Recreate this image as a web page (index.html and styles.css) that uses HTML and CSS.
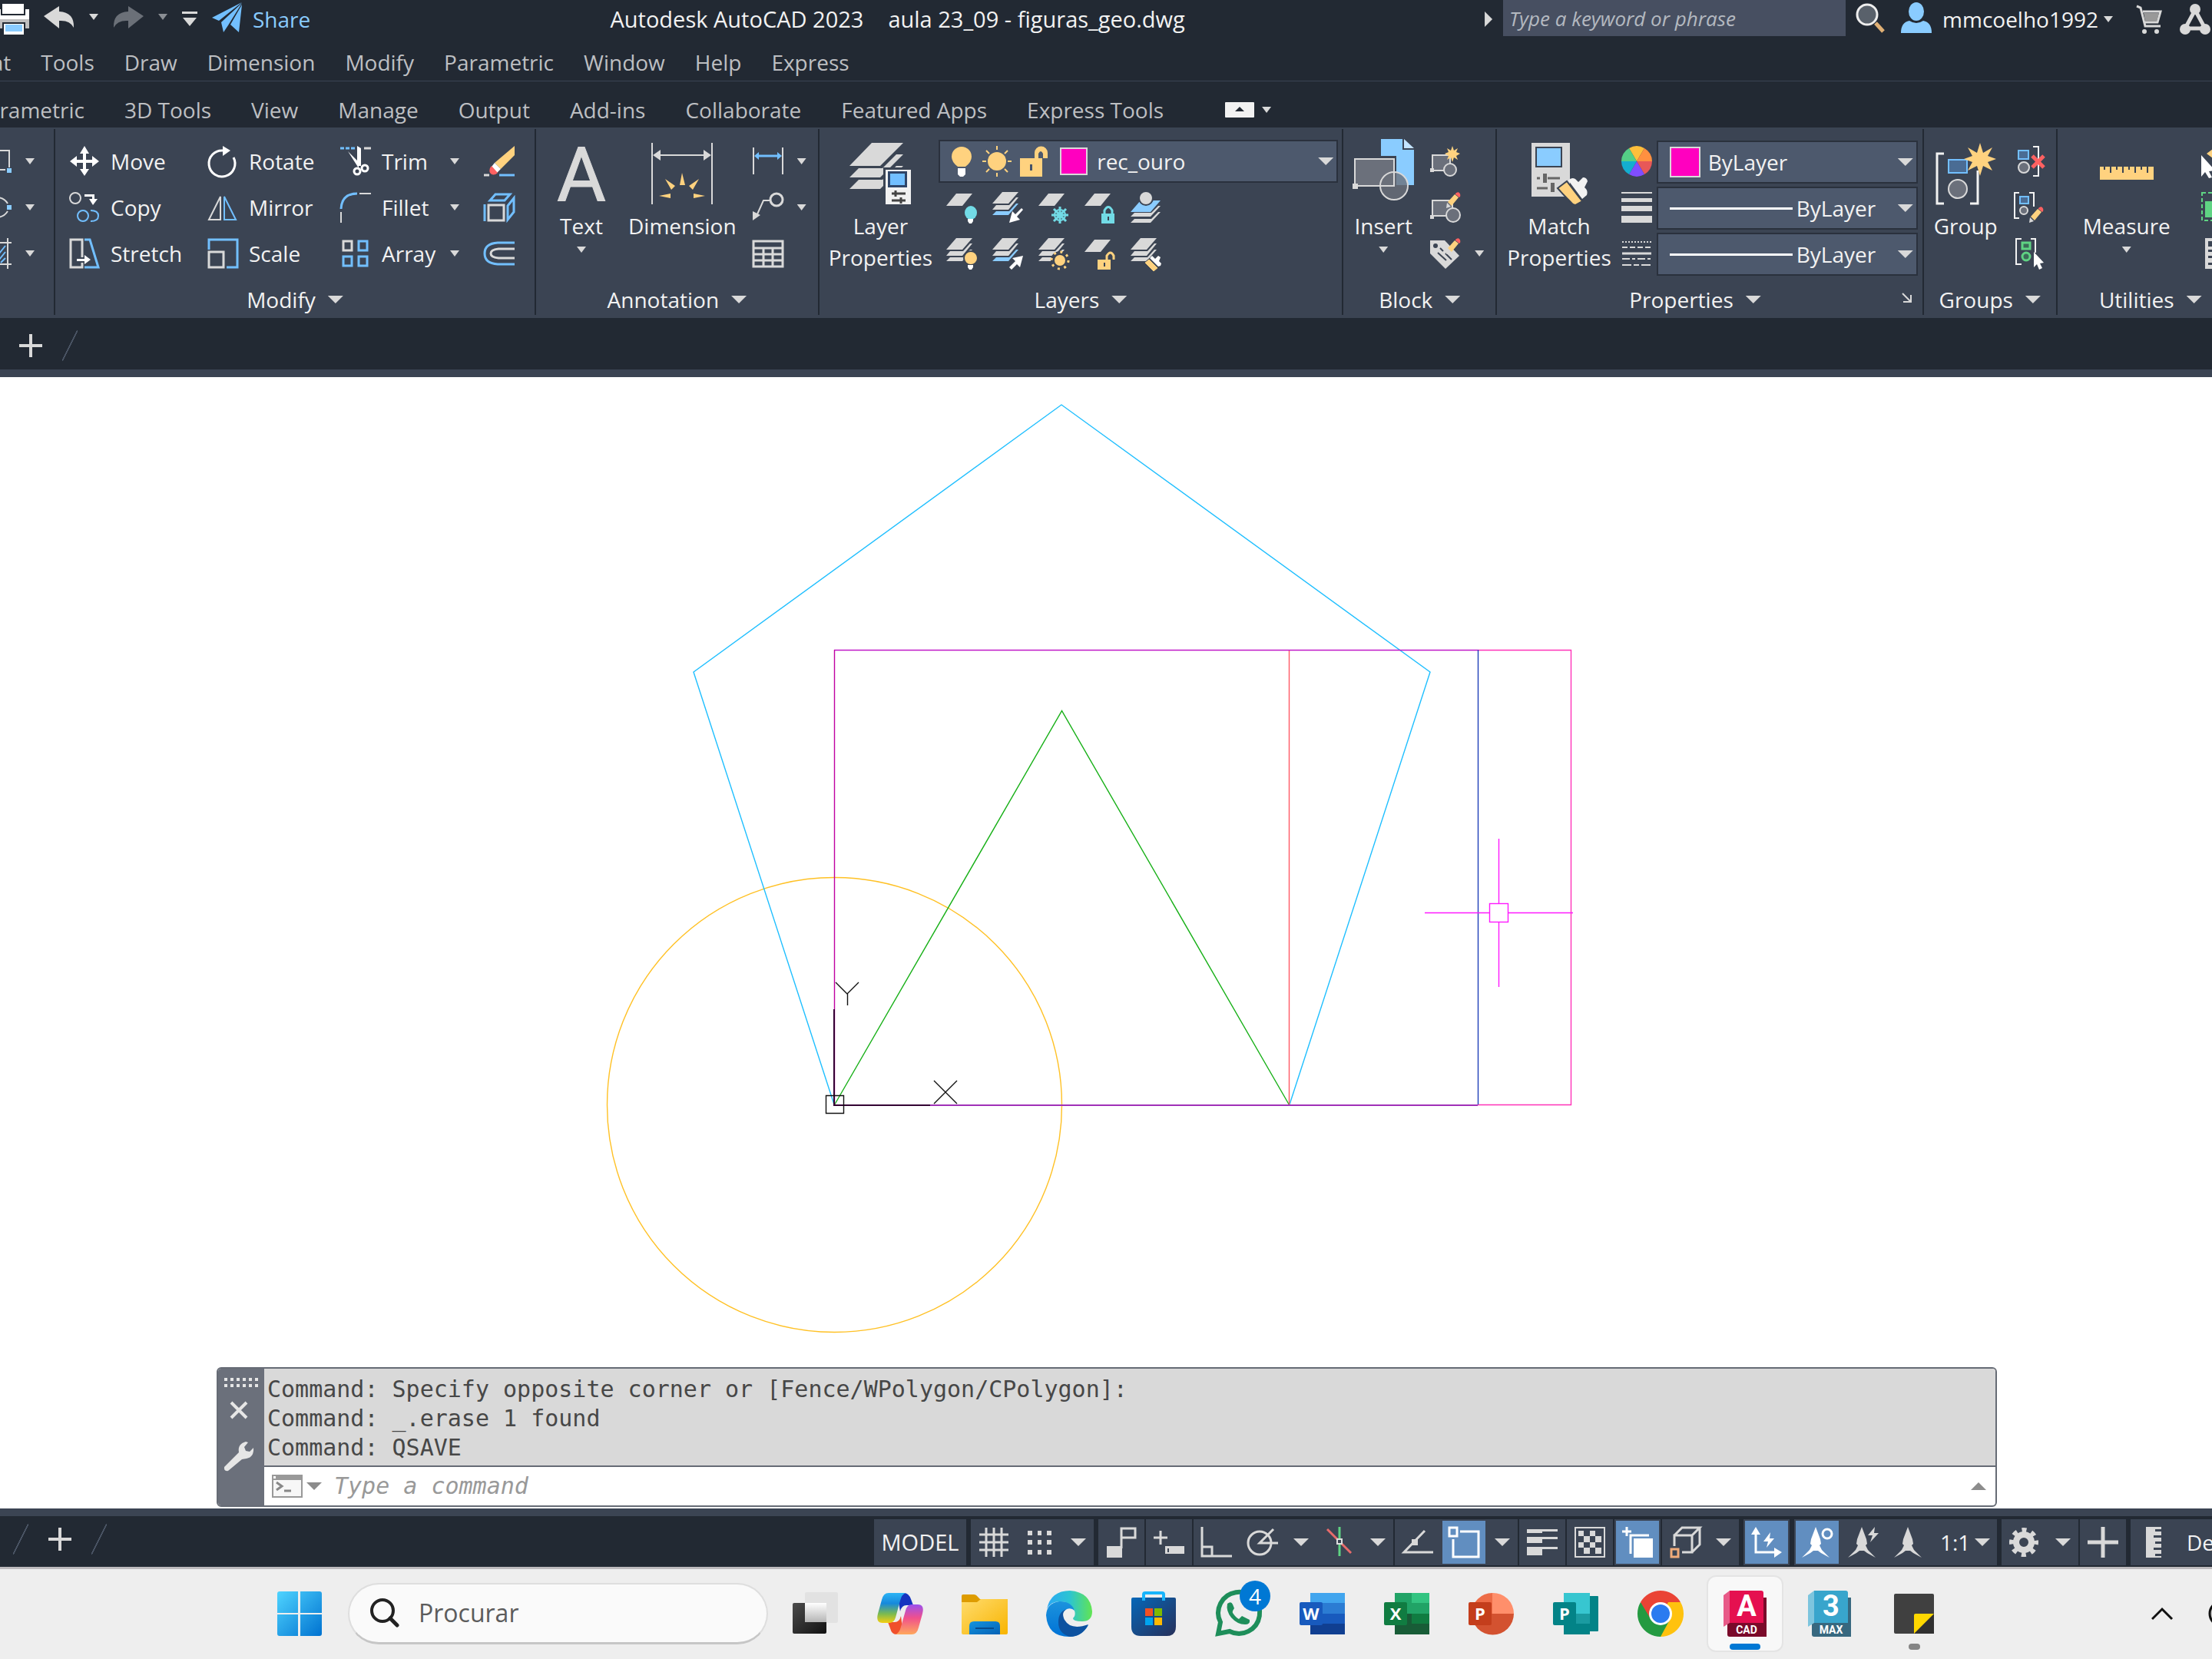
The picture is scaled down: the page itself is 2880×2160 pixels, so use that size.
FILE: index.html
```html
<!DOCTYPE html>
<html lang="en">
<head>
    <meta charset="UTF-8">
    <meta name="viewport" content="width=device-width, initial-scale=1.0">
    <title>Autodesk AutoCAD 2023 - aula 23_09 - figuras_geo.dwg</title>
    <link rel="stylesheet" href="styles.css">
</head>
<body>
    <!-- Shared icon parts -->
    <svg class="defs" width="0" height="0">
        <defs>
            <symbol id="sheet" viewBox="0 0 40 40"><path class="fg" d="M0 18L13 2h21L21 18z"/></symbol>
            <symbol id="stack" viewBox="0 0 40 40">
                <path class="fg" d="M0 15L13 0h21L21 15zM0 23l5-6h17l9-10h3L21 23zM0 30l5-5h17l9-10h3L21 30z"/>
            </symbol>
            <symbol id="stackBlue" viewBox="0 0 40 40">
                <path class="fg" d="M0 15L13 0h21L21 15zM0 23l5-6h17l9-10h3L21 23z"/>
                <path class="fb" d="M0 30l5-5h17l9-10h3L21 30z"/>
            </symbol>
            <symbol id="pencil" viewBox="0 0 20 22">
                <path class="fg" d="M1 21l1-7 5 5z"/>
                <path class="fy" d="M3 13L12 3l5 4-9 11z"/>
                <path class="fr" d="M13 2q3-3 5-1t1 5l-1 1-5-4z"/>
            </symbol>
            <symbol id="scaleMan" viewBox="0 0 40 40">
                <path fill="currentColor" d="M18 0l6 16 1 6-2 2 3 6 10 10-11-6-4-3h-6l-4 3L0 40l10-10 3-6-2-2 1-6z"/>
            </symbol>
            <linearGradient id="winGrad" x1="0" y1="0" x2="1" y2="1"><stop offset="0" stop-color="#4fd4ff"/><stop offset="1" stop-color="#0072d0"/></linearGradient>
            <linearGradient id="darkGrad" x1="0" y1="0" x2="1" y2="1"><stop offset="0" stop-color="#4c4c4c"/><stop offset="1" stop-color="#111"/></linearGradient>
            <linearGradient id="lightGrad" x1="0" y1="0" x2="0" y2="1"><stop offset="0" stop-color="#fff"/><stop offset="1" stop-color="#b5b5b5"/></linearGradient>
            <linearGradient id="coA" x1="0" y1="0" x2="0" y2="1"><stop offset="0" stop-color="#2cb4f5"/><stop offset=".35" stop-color="#1689dc"/><stop offset=".7" stop-color="#7cba50"/><stop offset="1" stop-color="#f5cf10"/></linearGradient>
            <linearGradient id="coB" x1="0" y1="0" x2="0" y2="1"><stop offset="0" stop-color="#9b50ee"/><stop offset=".45" stop-color="#f0508c"/><stop offset="1" stop-color="#ffa85c"/></linearGradient>
            <linearGradient id="foldGrad" x1="0" y1="0" x2="1" y2="1"><stop offset="0" stop-color="#ffdc6e"/><stop offset="1" stop-color="#f8b400"/></linearGradient>
            <linearGradient id="foldBlue" x1="0" y1="0" x2="1" y2="1"><stop offset="0" stop-color="#1494df"/><stop offset="1" stop-color="#0561b5"/></linearGradient>
            <linearGradient id="edgeA" x1="0" y1="0" x2="1" y2="0"><stop offset="0" stop-color="#2ba8f5"/><stop offset=".5" stop-color="#2cc4d2"/><stop offset="1" stop-color="#62e552"/></linearGradient>
            <linearGradient id="edgeB" x1="0" y1="0" x2="0" y2="1"><stop offset="0" stop-color="#1c93dd"/><stop offset="1" stop-color="#0072d6"/></linearGradient>
            <linearGradient id="storeGrad" x1="0" y1="0" x2="1" y2="1"><stop offset="0" stop-color="#0667b8"/><stop offset="1" stop-color="#27305a"/></linearGradient>
        </defs>
    </svg>

    <header class="titlebar">
        <div class="quick-access">
            <button aria-label="Plot">
                <svg class="ic" viewBox="0 0 40 40"><path fill="#fff" d="M5 2h28v13H5zM0 9h3v8h32V9h5v13H0z"/><path fill="#bfbfbf" d="M0 22h40v12h-5v-8H5v8H0z"/><path fill="#fff" d="M7 28h26v14H7z"/><path fill="#8accff" d="M9 29h22v9H9z"/></svg>
            </button>
            <button class="undo" aria-label="Undo">
                <svg class="ic" viewBox="0 0 40 40"><path class="fg" d="M0 18L20 5v7q20 1 19 21-5-10-19-9v10z"/></svg>
            </button>
            <span class="caret"></span>
            <button class="redo" aria-label="Redo">
                <svg class="ic" viewBox="0 0 40 40"><path fill="#6b7078" d="M40 18L20 5v7Q0 13 1 33q5-10 19-9v10z"/></svg>
            </button>
            <span class="caret dim"></span>
            <button class="customize" aria-label="Customize">
                <svg width="20" height="20" viewBox="0 0 20 20"><path class="fg" d="M0 0h20v3H0zM1 8h18l-9 11z"/></svg>
            </button>
            <button class="share">
                <svg class="ic" viewBox="0 0 40 40"><path fill="#72bfff" d="M39 0L0 20l9 4zM39 1L12 26l3 13 6-9zM39 3L24 29l11 10z"/></svg>
                Share
            </button>
        </div>
        <div class="doc-title"><span>Autodesk AutoCAD 2023</span><span>aula 23_09 - figuras_geo.dwg</span></div>
        <div class="account">
            <span class="caret-right"></span>
            <input type="text" class="help-search" aria-label="Search help" placeholder="Type a keyword or phrase">
            <button class="find" aria-label="Search">
                <svg class="ic" viewBox="0 0 40 40"><circle cx="16" cy="16" r="13" fill="#59616b" stroke="#eee" stroke-width="3"/><path stroke="#e0b075" stroke-width="5" d="M27 27l10 11"/></svg>
            </button>
            <button class="user">
                <svg class="ic" viewBox="0 0 40 40"><ellipse cx="20" cy="12" rx="10" ry="12" fill="#8accff"/><path fill="#8accff" d="M0 40q0-14 11-16 9 6 18 0 11 2 11 16z"/></svg>
                <span>mmcoelho1992</span>
                <span class="caret"></span>
            </button>
            <button class="cart" aria-label="App store">
                <svg class="ic" viewBox="0 0 40 40"><path class="ln" stroke-width="3" d="M4 3l5 2 6 24h20M12 10h23l-4 14H14"/><path fill="#999" d="M13 12h20l-3 11H15z"/><circle class="fg" cx="14" cy="36" r="3"/><circle class="fg" cx="30" cy="36" r="3"/></svg>
            </button>
            <button aria-label="Autodesk app">
                <svg class="ic" viewBox="0 0 40 40"><path class="ln" stroke-width="5" d="M20 8L7 32h26z"/><circle class="fg" cx="20" cy="7" r="7"/><circle class="fg" cx="7" cy="33" r="7"/><circle class="fg" cx="33" cy="33" r="7"/></svg>
            </button>
        </div>
    </header>

    <nav class="menubar">
        <button>Format</button>
        <button>Tools</button>
        <button>Draw</button>
        <button>Dimension</button>
        <button>Modify</button>
        <button>Parametric</button>
        <button>Window</button>
        <button>Help</button>
        <button>Express</button>
    </nav>

    <nav class="tabs">
        <button>Parametric</button>
        <button>3D Tools</button>
        <button>View</button>
        <button>Manage</button>
        <button>Output</button>
        <button>Add-ins</button>
        <button>Collaborate</button>
        <button>Featured Apps</button>
        <button>Express Tools</button>
        <button class="minimize" aria-label="Minimize ribbon">
            <svg width="38" height="20" viewBox="0 0 38 20"><rect width="38" height="20" rx="1" fill="#f2f2f2"/><path fill="#222933" d="M13 12l6-6 6 6z"/></svg>
            <span class="caret"></span>
        </button>
    </nav>

    <main class="ribbon">
        <section class="panel panel-draw">
            <div class="panel-body">
                <div class="rows">
                    <button class="split" aria-label="Rectangle"><svg class="ic" viewBox="0 0 40 40"><path class="ln" d="M0 6h37v22M0 31h32"/><path class="fb" d="M34 29h6v6h-6z"/></svg><span class="caret"></span></button>
                    <button class="split" aria-label="Ellipse"><svg class="ic" viewBox="0 0 40 40"><path class="ln" d="M35 15Q30 7 20 7M35 25q-5 8-15 8"/><path class="fb" d="M34 17h6v6h-6z"/></svg><span class="caret"></span></button>
                    <button class="split" aria-label="Hatch"><svg class="ic" viewBox="0 0 40 40"><path class="ln" d="M20 6h20M20 34h20M35 0v40"/><path class="lb" d="M24 20l8-10M24 28l8-10M26 32l6-6"/></svg><span class="caret"></span></button>
                </div>
            </div>
        </section>

        <section class="panel panel-modify">
            <div class="panel-body modify-grid">
                <button class="tool"><svg class="ic" viewBox="0 0 40 40"><path class="fw" d="M20 0l6 10h-4v8h8v-5l9 7-9 7v-5h-8v8h4l-6 9-6-9h4v-8h-8v5l-9-7 9-7v5h8v-8h-4z"/></svg>Move</button>
                <button class="tool"><svg class="ic" viewBox="0 0 40 40"><path fill="none" stroke="#fff" stroke-width="3" d="M20 6A17 17 0 1 0 34 15"/><path class="fw" d="M20 0l10 6-10 7z"/></svg>Rotate</button>
                <button class="tool with-caret"><svg class="ic" viewBox="0 0 40 40"><path class="lb" stroke-dasharray="5 2" stroke-width="3" d="M0 3h20"/><path class="ln" stroke-width="3" d="M31 3h9"/><path class="fw" d="M22 0l5 3v23h-5zM10 7l14 14v8z"/><circle cx="22" cy="33" r="4" fill="none" stroke="#fff" stroke-width="3"/><circle cx="32" cy="29" r="4" fill="none" stroke="#fff" stroke-width="3"/></svg><span>Trim</span><span class="caret"></span></button>
                <button class="tool" aria-label="Erase"><svg class="ic" viewBox="0 0 40 40"><path class="fy" d="M40 0v12L22 30l-8-8z"/><path class="fw" d="M14 22l8 8-5 5-7-8z"/><path class="fr" d="M10 26l8 9q-6 5-10 0-2-5 2-9z"/><path class="ln" stroke-width="3" d="M0 38h7"/><path class="lb" stroke-width="3" d="M20 38h20"/></svg></button>

                <button class="tool"><svg class="ic" viewBox="0 0 40 40"><circle class="ln" cx="8" cy="8" r="7"/><path class="fw" d="M20 3h13v6h4l-6 8-5-8h4V6H20z"/><circle class="lb" cx="18" cy="31" r="7"/><path class="lb" d="M28 24q10 0 10 7t-10 7"/></svg>Copy</button>
                <button class="tool"><svg class="ic" viewBox="0 0 40 40"><path class="ln" d="M2 36L17 6v30z"/><path class="lb" d="M37 36L22 6v30z"/></svg>Mirror</button>
                <button class="tool with-caret"><svg class="ic" viewBox="0 0 40 40"><path class="lb" stroke-width="3" d="M1 22Q2 2 22 2"/><path class="ln" d="M25 2h15M1 26v14"/></svg><span>Fillet</span><span class="caret"></span></button>
                <button class="tool" aria-label="Explode"><svg class="ic" viewBox="0 0 40 40"><path class="ln" stroke-width="3" d="M6 17h20v20H6z"/><path class="lb" stroke-width="3" d="M1 16v22M8 11l7-8h19l-7 8zM31 18l8-10v18l-8 10z"/></svg></button>

                <button class="tool"><svg class="ic" viewBox="0 0 40 40"><path class="ln" stroke-width="3" d="M17 25V2H2v36h15v-6"/><path class="lb" stroke-width="3" d="M20 2h7l11 36H20"/><path class="fw" d="M10 27h10v-5l8 6-8 6v-4H10z"/></svg>Stretch</button>
                <button class="tool"><svg class="ic" viewBox="0 0 40 40"><path class="lb" stroke-width="3" d="M2 15V2h37v36H25"/><path class="ln" stroke-width="3" d="M2 18h19v20H2z"/></svg>Scale</button>
                <button class="tool with-caret"><svg class="ic" viewBox="0 0 40 40"><path class="ln" stroke-width="3" d="M4 4h11v12H4z"/><path class="lb" stroke-width="3" d="M24 4h11v12H24zM4 24h11v12H4zM24 24h11v12H24z"/></svg><span>Array</span><span class="caret"></span></button>
                <button class="tool" aria-label="Offset"><svg class="ic" viewBox="0 0 40 40"><path class="lb" stroke-width="3" d="M40 6H18Q1 7 1 20t17 14h22"/><path class="ln" stroke-width="3" d="M40 14H19q-10 1-10 6t10 6h21"/></svg></button>
            </div>
            <button class="panel-title">Modify<span class="caret big"></span></button>
        </section>

        <section class="panel panel-annotation">
            <div class="panel-body">
                <button class="big-tool text-tool">
                    <svg class="ic-big" viewBox="0 0 80 80"><text class="glyph-a" x="40" y="75" text-anchor="middle">A</text></svg>
                    Text
                    <span class="caret"></span>
                </button>
                <button class="big-tool">
                    <svg class="ic-big" viewBox="0 0 80 80"><path class="ln" d="M1 0v80M79 0v80M8 16h64"/><path class="fg" d="M2 16l10-7v14zM78 16l-10-7v14z"/><path class="fy" d="M37 55l3-16 4 16zM18 47l13 9-5 5zM62 47l-13 9 5 5zM10 69l15-3v6zM70 69l-15-3v6z"/></svg>
                    Dimension
                </button>
                <div class="rows">
                    <button class="split" aria-label="Linear"><svg class="ic" viewBox="0 0 40 40"><path class="ln" d="M1 2v35M39 2v35"/><path class="lb" stroke-width="3" d="M6 13h28"/><path fill="#72bfff" d="M2 13l6-5v10zM38 13l-6-5v10z"/></svg><span class="caret"></span></button>
                    <button class="split" aria-label="Leader"><svg class="ic" viewBox="0 0 40 40"><circle class="ln" stroke-width="3" cx="31" cy="10" r="8"/><path class="ln" d="M23 11h-9L5 31"/><path class="fg" d="M0 37V25l10 5z"/></svg><span class="caret"></span></button>
                    <button class="split" aria-label="Table"><svg class="ic" viewBox="0 0 40 40"><path class="ln" stroke-width="3" d="M1 4h38v33H1zM1 13h38M1 21h38M1 29h38M14 13v24M26 13v24"/></svg></button>
                </div>
            </div>
            <button class="panel-title">Annotation<span class="caret big"></span></button>
        </section>

        <section class="panel panel-layers">
            <div class="panel-body">
                <button class="big-tool">
                    <svg class="ic-big" viewBox="0 0 80 80"><path class="fg" d="M0 30L29 0h41L40 30zM0 45l12-12h31l18-18h9L40 45zM0 60l12-12h31l18-18h9L40 60z"/><path fill="#3b4453" d="M44 32h36v48H44z"/><path fill="#f2f2f2" d="M47 35h33v45H47z"/><path fill="#2f4568" d="M50 37h25v21H50z"/><path fill="#72bfff" d="M53 40h19v15H53z"/><path stroke="#444" stroke-width="3" d="M55 66h18M55 75h18M60 62v8M67 71v8"/></svg>
                    Layer<br>Properties
                </button>
                <div class="layer-col">
                    <label class="combo">
                        <svg class="ic" viewBox="0 0 40 40"><path class="fy" d="M20 1a13 13 0 0 1 13 13q0 7-8 13H15Q7 21 7 14A13 13 0 0 1 20 1z"/><path class="fw" d="M15 29h10v8l-3 3h-4l-3-3z"/></svg>
                        <svg class="ic" viewBox="0 0 40 40"><circle class="fy" cx="20" cy="20" r="12"/><path stroke="#ffd27f" stroke-width="2" d="M20 0v5M20 35v5M1 20h5M34 20h5M6 6l4 4M34 6l-4 4M6 34l4-4M34 34l-4-4"/></svg>
                        <svg class="ic" viewBox="0 0 40 40"><path class="fy" d="M4 16h19v-7a8 8 0 0 1 17 0v7h-6v-6q-3-6-6 0v6h5v24H4z"/><path fill="#45526a" d="M17 24h3v8h-3z"/></svg>
                        <span class="swatch"></span>
                        <select class="combo-select" aria-label="Layer"><option>rec_ouro</option></select>
                        <span class="caret big"></span>
                    </label>
                    <div class="layer-grid">
                        <button aria-label="Off"><svg class="ic" viewBox="0 0 40 40"><use href="#sheet"/><ellipse class="ft" cx="32" cy="27" rx="8" ry="9"/><path class="fw" d="M28 35h7v3l-2 3h-3l-2-3z"/></svg></button>
                        <button aria-label="Isolate"><svg class="ic" viewBox="0 0 40 40"><use href="#stackBlue"/><path class="fw" d="M22 40l4-15 4 4 8-8 2 2-8 9 4 4z"/></svg></button>
                        <button aria-label="Freeze"><svg class="ic" viewBox="0 0 40 40"><use href="#sheet"/><path fill="none" stroke="#72dbe6" stroke-width="3" d="M28 19v22M17 30h22M20 22l16 16M36 22L20 38"/><circle cx="28" cy="30" r="7" fill="none" stroke="#72dbe6" stroke-width="2"/></svg></button>
                        <button aria-label="Lock"><svg class="ic" viewBox="0 0 40 40"><use href="#sheet"/><path class="ft" d="M22 28h17v13H22z"/><path fill="none" stroke="#72dbe6" stroke-width="3" d="M26 29v-5q5-9 10 0v5"/><path fill="#3b4453" d="M30 32h2v5h-2z"/></svg></button>
                        <button aria-label="Make current"><svg class="ic" viewBox="0 0 40 40"><path class="fg" d="M0 32l5-5h22l9-9h3L26 32zM0 40l5-5h22l9-9h3L26 40z"/><path class="fb" d="M0 26l13-15h26L26 26z"/><circle class="fg" cx="20" cy="8" r="9" stroke="#3b4453" stroke-width="2"/></svg></button>
                        <button aria-label="On"><svg class="ic" viewBox="0 0 40 40"><use href="#stack"/><ellipse class="fy" cx="32" cy="26" rx="9" ry="9" stroke="#3b4453" stroke-width="2"/><path class="fw" d="M28 35h7v3l-2 3h-3l-2-3z"/></svg></button>
                        <button aria-label="Unisolate"><svg class="ic" viewBox="0 0 40 40"><use href="#stackBlue"/><path class="fw" d="M40 23l-4 15-4-4-7 7-3-3 8-8-4-4z"/></svg></button>
                        <button aria-label="Thaw"><svg class="ic" viewBox="0 0 40 40"><use href="#stack"/><circle cx="28" cy="29" r="12" fill="#3b4453"/><circle class="fy" cx="28" cy="29" r="7"/><circle cx="28" cy="29" r="11" fill="none" stroke="#ffd27f" stroke-width="3" stroke-dasharray="3 5.64"/></svg></button>
                        <button aria-label="Unlock"><svg class="ic" viewBox="0 0 40 40"><use href="#sheet"/><path class="fy" d="M17 28h17v13H17z"/><path fill="none" stroke="#ffd27f" stroke-width="3" d="M29 29v-6q5-8 9 0v5"/><path fill="#3b4453" d="M25 32h2v5h-2z"/></svg></button>
                        <button aria-label="Match layer"><svg class="ic" viewBox="0 0 40 40"><use href="#stack"/><path class="fy" stroke="#3b4453" d="M18 32l6-5 12 12-6 5z"/><path class="fw" d="M25 26l3-3 4 4 4-4 3 2-2 5 3 3-1 3-3 1z"/></svg></button>
                    </div>
                </div>
            </div>
            <button class="panel-title">Layers<span class="caret big"></span></button>
        </section>

        <section class="panel panel-block">
            <div class="panel-body">
                <button class="big-tool insert-tool">
                    <svg class="ic-big" viewBox="0 0 80 80"><path fill="#8accff" d="M37-5h28v14h15v46H57V17H37z"/><path fill="#c4e4ff" d="M67-5l13 12H67z"/><path fill="#6b707b" stroke="#d9d9d9" stroke-width="2" d="M3 21h51v35H3z"/><path class="fg" d="M0 53h7v7H0z"/><circle cx="54" cy="56" r="18" fill="#6b707b" fill-opacity=".8" stroke="#d9d9d9" stroke-width="2"/><path class="ln" d="M54 38v18H36"/></svg>
                    Insert
                    <span class="caret"></span>
                </button>
                <div class="rows">
                    <button class="split" aria-label="Create block"><svg class="ic" viewBox="0 0 40 40"><path class="blk" d="M3 12h23v20H3z"/><circle class="blk" cx="26" cy="31" r="8"/><path class="fg" d="M0 29h5v5H0z"/><path class="fy" d="M29 0l2 6 5-3-2 5 5 2-5 3 2 5-5-3-2 6-2-6-5 3 2-5-5-3 5-2-2-5 5 3z"/></svg></button>
                    <button class="split" aria-label="Edit block"><svg class="ic" viewBox="0 0 40 40"><path class="blk" d="M3 11h26v20H3z"/><circle class="blk" cx="30" cy="30" r="9"/><path class="fg" d="M0 30h5v5H0z"/><use href="#pencil" x="20" y="0" width="20" height="22"/></svg></button>
                    <button class="split" aria-label="Edit attributes"><svg class="ic" viewBox="0 0 40 40"><path class="fg" d="M0 3h19l19 20-18 17L0 20z"/><circle cx="7" cy="10" r="3" fill="#3b4453"/><path stroke="#3b4453" stroke-width="2" d="M13 13l4 4M10 19l11 10M20 20l8 8"/><use href="#pencil" x="20" y="0" width="20" height="22"/></svg><span class="caret"></span></button>
                </div>
            </div>
            <button class="panel-title">Block<span class="caret big"></span></button>
        </section>

        <section class="panel panel-properties">
            <div class="panel-body">
                <button class="big-tool">
                    <svg class="ic-big" viewBox="0 0 80 80"><path class="fg" d="M4 0h50v70H4z"/><path fill="#3b4453" d="M9 5h35v27H9z"/><path fill="#8accff" d="M11 7h31v23H11z"/><path stroke="#666" stroke-width="3" d="M11 46h4M25 46h16M11 59h14"/><path fill="#666" d="M19 40h5v12h-5zM29 52h5v12h-5z"/><path class="fy" stroke="#3b4453" stroke-width="2" d="M38 59l12-9 20 26-9 5q-3 0-6-4-10-10-17-18z"/><path fill="#f2f2f2" d="M52 49q4-5 9-2l4 4 6-6q5 0 6 5l-4 8q5 4 3 10l-6 5z"/></svg>
                    Match<br>Properties
                </button>
                <div class="prop-rows">
                    <div class="prop-row">
                        <svg class="ic" viewBox="0 0 40 40"><path fill="#ffbf3b" d="M20 20L10 3a20 20 0 0 1 20 0z"/><path fill="#ff9040" d="M20 20L30 3a20 20 0 0 1 10 17z"/><path fill="#e85858" d="M20 20h20a20 20 0 0 1-10 17z"/><path fill="#804dff" d="M20 20l10 17a20 20 0 0 1-20 0z"/><path fill="#14aed0" d="M20 20L10 37A20 20 0 0 1 0 20z"/><path fill="#54cf86" d="M20 20H0A20 20 0 0 1 10 3z"/></svg>
                        <label class="combo">
                            <span class="swatch large"></span>
                            <select class="combo-select" aria-label="Object color"><option>ByLayer</option></select>
                            <span class="caret big"></span>
                        </label>
                    </div>
                    <div class="prop-row">
                        <svg class="ic" viewBox="0 0 40 40"><path class="fg" d="M0 0h40v2H0zM0 8h40v5H0zM0 18h40v7H0zM0 31h40v9H0z"/></svg>
                        <label class="combo">
                            <span class="line-sample"></span>
                            <select class="combo-select" aria-label="Lineweight"><option>ByLayer</option></select>
                            <span class="caret big"></span>
                        </label>
                    </div>
                    <div class="prop-row">
                        <svg class="ic" viewBox="0 0 40 40"><path class="ln" stroke-dasharray="2 2" d="M1 5h38"/><path class="ln" stroke-dasharray="7 3" d="M1 12h38"/><path class="ln" stroke-width="3" d="M1 20h38"/><path class="ln" stroke-dasharray="10 3 4 3" d="M1 27h38"/><path class="ln" stroke-dasharray="12 3 7 3" d="M1 35h38"/></svg>
                        <label class="combo">
                            <span class="line-sample"></span>
                            <select class="combo-select" aria-label="Linetype"><option>ByLayer</option></select>
                            <span class="caret big"></span>
                        </label>
                    </div>
                </div>
            </div>
            <div class="title-row">
                <button class="panel-title">Properties<span class="caret big"></span></button>
                <button class="launcher" aria-label="Properties palette"><svg width="12" height="12" viewBox="0 0 12 12"><path fill="none" stroke="#d9d9d9" stroke-width="2" d="M0 0l10 10M11 2v9H1"/></svg></button>
            </div>
        </section>

        <section class="panel panel-groups">
            <div class="panel-body">
                <button class="big-tool">
                    <svg class="ic-big" viewBox="0 0 80 80"><path fill="none" stroke="#f2f2f2" stroke-width="3" d="M12 14H3v65h9M46 79h10V36"/><path fill="#4a6c94" stroke="#72bfff" stroke-width="2" d="M18 22h24v17H18z"/><circle cx="30" cy="60" r="12" fill="#6b707b" stroke="#d9d9d9" stroke-width="2"/><path class="fy" d="M59 0l4 13 12-7-6 11 11 4-11 4 6 11-12-6-4 13-4-13-12 6 6-11-11-4 11-4-6-11 12 7z"/></svg>
                    Group
                </button>
                <div class="rows">
                    <button class="split" aria-label="Ungroup"><svg class="ic" viewBox="0 0 40 40"><path fill="none" stroke="#f2f2f2" stroke-width="2" d="M25 1h7v38h-7"/><path fill="#4a6c94" stroke="#72bfff" stroke-width="2" d="M6 6h13v11H6z"/><circle cx="13" cy="28" r="7" fill="#6b707b" stroke="#d9d9d9" stroke-width="2"/><path stroke="#ff6161" stroke-width="5" d="M24 13l15 15M39 13L24 28"/></svg></button>
                    <button class="split" aria-label="Group edit"><svg class="ic" viewBox="0 0 40 40"><path fill="none" stroke="#f2f2f2" stroke-width="2" d="M7 1H1v33h6M20 1h6v18"/><path fill="#4a6c94" stroke="#72bfff" stroke-width="2" d="M8 6h11v9H8z"/><circle cx="13" cy="24" r="5" fill="#6b707b" stroke="#d9d9d9" stroke-width="2"/><use href="#pencil" x="19" y="19" width="20" height="22"/></svg></button>
                    <button class="split" aria-label="Group selection"><svg class="ic" viewBox="0 0 40 40"><path fill="none" stroke="#f2f2f2" stroke-width="2" d="M10 1H3v33h7M22 1h6v18"/><path fill="#3c6b58" stroke="#5fd383" stroke-width="3" d="M11 6h10v8H11z"/><circle cx="16" cy="24" r="5" fill="#3c6b58" stroke="#5fd383" stroke-width="3"/><path class="fw" d="M26 18l13 14-5 1 3 6-4 2-3-7-4 4z"/></svg></button>
                </div>
            </div>
            <button class="panel-title">Groups<span class="caret big"></span></button>
        </section>

        <section class="panel panel-utilities">
            <div class="panel-body">
                <button class="big-tool">
                    <svg class="ic-big" viewBox="0 0 80 80"><path class="fy" d="M5 31h70v17H5z"/><path stroke="#3b4453" stroke-width="2" d="M11 31v4M19 31v8M27 31v4M35 31v8M43 31v4M51 31v8M59 31v4M67 31v8"/></svg>
                    Measure
                    <span class="caret"></span>
                </button>
                <div class="rows">
                    <button class="split" aria-label="Quick select"><svg class="ic" viewBox="0 0 40 40"><path class="fy" d="M7 10l8-6v12z"/><path class="fw" d="M0 12l18 20-8 1 4 8-4 1-5-8-5 6z"/></svg></button>
                    <button class="split" aria-label="Select all"><svg class="ic" viewBox="0 0 40 40"><path fill="none" stroke="#5fd383" stroke-width="2" stroke-dasharray="5 3" d="M1 1h38v36H1z"/><path fill="#5fd383" d="M5 12h20v21H5z"/></svg></button>
                    <button class="split" aria-label="Calculator"><svg class="ic" viewBox="0 0 40 40"><path class="fg" d="M5 0h30v40H5z"/><path fill="#3b4453" d="M9 4h22v7H9zM9 15h22v3H9zM9 23h22v3H9zM9 32h22v3H9z"/></svg></button>
                </div>
            </div>
            <button class="panel-title">Utilities<span class="caret big"></span></button>
        </section>
    </main>

    <div class="file-tabs">
        <button aria-label="New tab"><svg width="30" height="30" viewBox="0 0 30 30"><path class="fg" d="M13 0h4v13h13v4H17v13h-4V17H0v-4h13z"/></svg></button>
        <span class="slash"></span>
    </div>

    <div class="canvas">
        <svg class="drawing" viewBox="0 0 2880 1473" preserveAspectRatio="xMidYMin meet">
            <g fill="none" stroke-width="1.4">
                <circle cx="1086.5" cy="947.5" r="296" stroke="#ffc125"/>
                <path stroke="#1fbfff" d="M1086 947L903 384l479-348 480 348-183 563"/>
                <path stroke="#18b018" d="M1086.5 947.5l296-513 296 513"/>
                <path stroke="#ff5a66" d="M1678.5 355v592"/>
                <path stroke="#ff33b8" d="M1924 355.5h121.5v592H1924"/>
                <path stroke="#1f3fb8" d="M1924.5 355v592"/>
                <path stroke="#c018c8" d="M1924 355.5h-838"/>
                <path stroke="#c000a0" d="M1086.5 355v592"/>
                <path stroke="#a030b8" stroke-width="2" d="M1086 948h838"/>
                <!-- UCS icon -->
                <path stroke="#330033" stroke-width="2" d="M1086 823v125h125"/>
                <path stroke="#111" d="M1075.500 935.500h23v23h-23zM1088 788l15 15 15-15M1103.500 803v15M1216 916l30 30M1246 916l-30 30"/>
                <!-- Crosshair -->
                <path stroke="#ff19ff" d="M1951.500 601v84M1951.500 710v84M1855 697.500h84M1964 697.500h84"/>
                <rect x="1939.500" y="685.500" width="24" height="24" fill="#fff" stroke="#ff19ff"/>
            </g>
        </svg>

        <div class="command-window">
            <div class="command-handle">
                <svg width="44" height="12" viewBox="0 0 44 12"><path stroke="#e6e6e6" stroke-width="4" stroke-dasharray="4 4" d="M0 2h44M0 10h44"/></svg>
                <button aria-label="Close"><svg width="24" height="24" viewBox="0 0 24 24"><path stroke="#e6e6e6" stroke-width="4" d="M2 2l20 20M22 2L2 22"/></svg></button>
                <button class="wrench" aria-label="Customize"><svg width="40" height="40" viewBox="0 0 40 40"><path fill="#e6e6e6" d="M1 34L20 15Q18 4 29 1l3 1-5 6 2 5 5 1 5-5q1 12-9 14l-6 1L6 39Q0 40 1 34z"/></svg></button>
            </div>
            <div class="command-main">
                <div class="history">
                    <div>Command: Specify opposite corner or [Fence/WPolygon/CPolygon]:</div>
                    <div>Command: _.erase 1 found</div>
                    <div>Command: QSAVE</div>
                </div>
                <div class="command-line">
                    <svg width="40" height="30" viewBox="0 0 40 30"><path fill="#f7f7f7" stroke="#999" stroke-width="2" d="M1 1h38v28H1z"/><path fill="#999" d="M0 0h40v7H0z"/><path fill="#fff" d="M2 2h3v3H2z"/><path fill="none" stroke="#888" stroke-width="3" d="M6 10l7 5-7 5M16 21h9"/></svg>
                    <span class="caret big gray"></span>
                    <input type="text" class="command-input" aria-label="Command" placeholder="Type a command">
                    <span class="caret-up"></span>
                </div>
            </div>
        </div>
    </div>

    <div class="statusbar">
        <div class="layout-tabs">
            <span class="slash"></span>
            <button aria-label="New layout"><svg width="30" height="30" viewBox="0 0 30 30"><path class="fg" d="M13 0h4v13h13v4H17v13h-4V17H0v-4h13z"/></svg></button>
            <span class="slash"></span>
        </div>
        <div class="status-tools">
            <div class="block"><button class="model">MODEL</button></div>
            <div class="block gap">
                <button class="cell" aria-label="Grid"><svg class="ic" viewBox="0 0 40 40"><path class="ln" stroke-width="3" d="M10 1v38M20 1v38M30 1v38M1 10h38M1 20h38M1 30h38"/></svg></button>
                <button class="cell" aria-label="Snap"><svg class="ic" viewBox="0 0 40 40"><path class="fg" d="M4 5h6v6H4zM17 5h5v6h-5zM29 5h6v6h-6zM4 17h6v6H4zM17 17h5v6h-5zM29 17h6v6h-6zM4 30h6v6H4zM17 30h5v6h-5zM29 30h6v6h-6z"/></svg></button>
                <button class="drop" aria-label="Snap options"><span class="caret big"></span></button>
            </div>
            <div class="block gap"><button class="cell" aria-label="Infer"><svg class="ic" viewBox="0 0 40 40"><path class="fg" d="M1 25h20v15H1z"/><path class="ln" stroke-width="3" d="M20 28V2h18v12H20"/></svg></button></div>
            <div class="block"><button class="cell" aria-label="Dynamic input"><svg class="ic" viewBox="0 0 40 40"><path class="ln" stroke-width="3" d="M9 5v18M0 14h18"/><path class="fg" d="M15 25h25v10H15z"/><path fill="#3b4453" d="M18 28h2v5h-2z"/></svg></button></div>
            <div class="block">
                <button class="cell" aria-label="Ortho"><svg class="ic" viewBox="0 0 40 40"><path class="ln" stroke-width="3" d="M1 0v38h39M1 26h13v12"/></svg></button>
                <button class="cell" aria-label="Polar"><svg class="ic" viewBox="0 0 40 40"><circle class="ln" stroke-width="3" cx="16" cy="21" r="15"/><path class="ln" stroke-width="3" d="M40 21H16L34 3"/></svg></button>
                <button class="drop" aria-label="Polar options"><span class="caret big"></span></button>
                <button class="cell" aria-label="Isodraft"><svg class="ic" viewBox="0 0 40 40"><path stroke="#e86b6b" stroke-width="3" d="M4 3l31 31"/><path stroke="#5fd383" stroke-width="3" d="M20 0v38"/><path fill="#3b4453" stroke="#ddd" stroke-width="2" d="M17 16h6v6h-6z"/></svg></button>
                <button class="drop" aria-label="Isodraft options"><span class="caret big"></span></button>
            </div>
            <div class="block">
                <button class="cell" aria-label="Tracking"><svg class="ic" viewBox="0 0 40 40"><path class="ln" stroke-width="3" d="M40 33H2L29 5"/><path class="fg" d="M12 16h8v8h-8z"/></svg></button>
                <button class="cell active" aria-label="Object snap"><svg class="ic" viewBox="0 0 40 40"><path fill="none" stroke="#fff" stroke-width="3" d="M1 1h10v11H1zM15 6h24v33H6V16"/></svg></button>
                <button class="drop" aria-label="Snap modes"><span class="caret big"></span></button>
            </div>
            <div class="block"><button class="cell" aria-label="Lineweight"><svg class="ic" viewBox="0 0 40 40"><path class="fg" d="M0 3h40v3H20v2H0zM0 13h40v3H20v5H0zM0 26h40v3H20v8H0z"/></svg></button></div>
            <div class="block"><button class="cell" aria-label="Transparency"><svg class="ic" viewBox="0 0 40 40"><path class="ln" d="M1 1h38v38H1z"/><path class="fg" d="M5 5h7v7H5zM20 5h7v7h-7zM12 12h8v8h-8zM27 12h8v8h-8zM5 20h7v7H5zM20 20h7v7h-7zM12 27h8v8h-8zM27 27h8v8h-8z"/></svg></button></div>
            <div class="block"><button class="cell active" aria-label="Selection cycling"><svg class="ic" viewBox="0 0 40 40"><path fill="none" stroke="#fff" stroke-width="3" d="M6 0v12M0 6h12M11 35V11h24"/><path class="fw" d="M15 15h25v25H15z"/></svg></button></div>
            <div class="block">
                <button class="cell" aria-label="3D snap"><svg class="ic" viewBox="0 0 40 40"><path class="ln" stroke-width="3" d="M6 25V11h23v22H16M6 11L16 1h23L29 11M39 1v22L29 33"/><path fill="none" stroke="#f0ab7a" stroke-width="3" d="M2 29h9v10H2z"/></svg></button>
                <button class="drop" aria-label="3D snap options"><span class="caret big"></span></button>
            </div>
            <div class="block gap"><button class="cell active" aria-label="Dynamic UCS"><svg class="ic" viewBox="0 0 40 40"><path fill="none" stroke="#fff" stroke-width="3" d="M6 8v25h25"/><path class="fw" d="M0 10L6 0l6 10zM30 27l10 6-10 7zM25 7l-9 12h6l-2 8 10-12h-6z"/></svg></button></div>
            <div class="block gap">
                <button class="cell active" aria-label="Annotation visibility"><svg class="ic white" viewBox="0 0 40 40"><use href="#scaleMan"/><circle cx="33" cy="9" r="6" fill="none" stroke="#fff" stroke-width="3"/></svg></button>
                <button class="cell" aria-label="Auto scale"><svg class="ic" viewBox="0 0 40 40"><use href="#scaleMan"/><path class="fg" d="M35 0l-9 11h6l-3 9 11-12h-6z"/></svg></button>
                <button class="cell" aria-label="Annotation scale"><svg class="ic" viewBox="0 0 40 40"><use href="#scaleMan"/></svg></button>
                <button class="scale">1:1<span class="caret big"></span></button>
            </div>
            <div class="block gap">
                <button class="cell" aria-label="Workspace"><svg class="ic" viewBox="0 0 40 40"><circle cx="19" cy="20" r="10" fill="none" stroke="#d9d9d9" stroke-width="8"/><circle cx="19" cy="20" r="16" fill="none" stroke="#d9d9d9" stroke-width="6" stroke-dasharray="6 6.566" stroke-dashoffset="3"/></svg></button>
                <button class="drop" aria-label="Workspace options"><span class="caret big"></span></button>
            </div>
            <div class="block"><button class="cell" aria-label="Monitor"><svg class="ic" viewBox="0 0 40 40"><path class="ln" stroke-width="5" d="M20 0v40M0 20h40"/></svg></button></div>
            <div class="block gap units"><button><svg class="ic" viewBox="0 0 40 40"><path class="fg" d="M10 0h20v3h-8v3h8v5H20v3h10v5h-8v3h8v5H20v3h10v5h-8v3h8v2H10z"/></svg><span>Decimal</span></button></div>
        </div>
    </div>

    <footer class="taskbar">
        <button class="start" aria-label="Start"><svg width="58" height="58" viewBox="0 0 58 58"><path fill="url(#winGrad)" d="M3 0h24v28H0V3q0-3 3-3zM30 0h25q3 0 3 3v25H30zM0 30h27v28H3q-3 0-3-3zM30 30h28v25q0 3-3 3H30z"/></svg></button>
        <label class="task-search">
            <svg width="38" height="38" viewBox="0 0 38 38"><circle cx="16" cy="16" r="14" fill="none" stroke="#222" stroke-width="4"/><path stroke="#222" stroke-width="5" stroke-linecap="round" d="M26 26l9 9"/></svg>
            <input type="text" aria-label="Procurar" placeholder="Procurar">
        </label>
        <div class="apps">
            <button class="app" aria-label="Task view"><svg viewBox="0 0 60 60"><rect x="16" y="2" width="43" height="40" rx="2" fill="#e2e2e2"/><rect y="16" width="44" height="40" rx="2" fill="url(#darkGrad)"/><path fill="url(#lightGrad)" d="M16 16h28v25H16z"/></svg></button>
            <button class="app" aria-label="Copilot"><svg viewBox="0 0 60 60"><path fill="#1533c0" d="M26 3h9q6 0 9 8l3 8h-9q-6 0-8 8z"/><path fill="#f0502c" d="M34 57h-9q-6 0-8-8l-3-8h9q6 0 8-8z"/><path fill="url(#coA)" d="M15 3h22q-5 2-7 10l-6 22q-2 7-8 7H7q-9 0-6-12l5-18Q8 3 15 3z"/><path fill="url(#coB)" d="M45 57H24q5-2 7-10l6-21q2-8 8-8h8q9 0 6 12l-5 18q-2 9-9 9z"/></svg></button>
            <button class="app" aria-label="File Explorer"><svg viewBox="0 0 60 60"><path fill="#de9c00" d="M0 7q0-2 2-2h14q3 0 5 3l3 3h33q3 0 3 3v6H0z"/><path fill="url(#foldGrad)" d="M0 15h20l5-4h35v44q0 2-2 2H2q-2 0-2-2z"/><path fill="url(#foldBlue)" d="M10 57V46q0-6 6-6h28q6 0 6 6v11z"/><path stroke="#064a8c" stroke-width="2" d="M18 49h24"/></svg></button>
            <button class="app" aria-label="Edge"><svg viewBox="0 0 60 60"><path fill="url(#edgeB)" d="M0 32Q1 16 17 14q20-1 20 12-4-4-10-2-10 5-2 19 10 13 30 2-9 15-25 15Q2 60 0 32z"/><path fill="#0d52a0" d="M27 24q-8 4-3 14 8 14 31 6-8 16-24 16-15-4-15-19 0-14 11-17z"/><path fill="url(#edgeA)" d="M1 24Q6 0 31 0q27 2 29 27 0 13-13 13-12 0-12-4 4-4 2-10-4-12-19-12Q6 14 1 24z"/></svg></button>
            <button class="app" aria-label="Store"><svg viewBox="0 0 60 60"><path fill="url(#storeGrad)" d="M1 11q0-2 2-2h54q2 0 2 2v36q0 12-12 12H13Q1 59 1 47z"/><path fill="none" stroke="#18b4fb" stroke-width="4" d="M17 13V5q0-2 2-2h22q2 0 2 2v8"/><path fill="#f25022" d="M19 23h10v10H19z"/><path fill="#7fba00" d="M31 23h10v10H31z"/><path fill="#00a4ef" d="M19 35h10v10H19z"/><path fill="#ffb900" d="M31 35h10v10H31z"/></svg></button>
            <button class="app" aria-label="WhatsApp"><svg viewBox="0 0 60 60"><path fill="none" stroke="#1e8e5a" stroke-width="6" d="M4 56l3-15A27 27 0 1 1 19 53z"/><path fill="#1e8e5a" d="M16 17q5-4 7 1l2 5q-3 4-2 6 4 6 8 8l4-4 10 5q1 6-6 6-10 0-18-9-7-9-5-18z"/></svg><span class="badge">4</span></button>
            <button class="app" aria-label="Word"><svg viewBox="0 0 60 60"><path fill="#41a5ee" d="M14 3h45v14H14z"/><path fill="#2b7cd3" d="M14 16h45v14H14z"/><path fill="#185abd" d="M14 30h45v14H14z"/><path fill="#103f91" d="M14 43h45v14H14z"/><rect y="15" width="30" height="30" rx="2" fill="#185abd"/><text class="logo" x="15" y="38" text-anchor="middle">W</text></svg></button>
            <button class="app" aria-label="Excel"><svg viewBox="0 0 60 60"><path fill="#21a366" d="M14 3h45v54H14z"/><path fill="#33c481" d="M36 3h23v13H36z"/><path fill="#107c41" d="M14 30h45v13H14z"/><path fill="#185c37" d="M14 43h45v14H14zM14 30h22v13H14z"/><rect y="15" width="30" height="30" rx="2" fill="#107c41"/><text class="logo" x="15" y="38" text-anchor="middle">X</text></svg></button>
            <button class="app" aria-label="PowerPoint"><svg viewBox="0 0 60 60"><path fill="#ed6c47" d="M31 3v27H4A27 27 0 0 1 31 3z"/><path fill="#ff8f6b" d="M31 3a27 27 0 0 1 28 27H31z"/><path fill="#d35230" d="M4 30h55a27 27 0 0 1-55 0z"/><rect y="15" width="30" height="30" rx="2" fill="#c43e1c"/><text class="logo" x="15" y="38" text-anchor="middle">P</text></svg></button>
            <button class="app" aria-label="Publisher"><svg viewBox="0 0 60 60"><rect x="40" y="7" width="19" height="46" rx="1" fill="#038387"/><path fill="#37c6d0" d="M14 3h34v27H14z"/><path fill="#1a9ba1" d="M14 30h34v13H14z"/><path fill="#038387" d="M14 43h34v14H14z"/><rect y="15" width="30" height="30" rx="2" fill="#038387"/><text class="logo" x="15" y="38" text-anchor="middle">P</text></svg></button>
            <button class="app" aria-label="Chrome"><svg viewBox="0 0 60 60"><path fill="#ea4335" d="M4 15a30 30 0 0 1 52 0L30 30z"/><path fill="#ffc20e" d="M56 15a30 30 0 0 1-26 45l-2-20 12-25z"/><path fill="#249a41" d="M4 15a30 30 0 0 0 26 45l12-22-14 4z"/><path fill="#ea4335" d="M4 15h52H30l-14 20z"/><circle cx="30" cy="30" r="15" fill="#fff"/><circle cx="30" cy="30" r="12" fill="#2b7bf0"/></svg></button>
            <button class="app current" aria-label="AutoCAD"><svg viewBox="0 0 60 60"><path fill="#7a0a2a" d="M7 9h51v51H10q-3 0-3-3z"/><path fill="#e85a88" d="M2 6l8-6v42l-8 5z"/><path fill="#e51050" d="M10 0h41q3 0 3 3v39H10z"/><text class="logo-big" x="32" y="33" text-anchor="middle">A</text><text class="logo-small" x="32" y="56" text-anchor="middle">CAD</text></svg><span class="running"></span></button>
            <button class="app" aria-label="3ds Max"><svg viewBox="0 0 60 60"><path fill="#37687f" d="M7 9h51v51H10q-3 0-3-3z"/><path fill="#7dc5de" d="M2 6l8-6v42l-8 5z"/><path fill="#38a5cc" d="M10 0h41q3 0 3 3v39H10z"/><text class="logo-big" x="32" y="33" text-anchor="middle">3</text><text class="logo-small" x="32" y="56" text-anchor="middle">MAX</text></svg></button>
            <button class="app" aria-label="Sticky Notes"><svg viewBox="0 0 60 60"><rect x="4" y="4" width="52" height="52" rx="2" fill="#404040"/><path fill="#303030" d="M30 56h26V30z"/><path fill="#ffd800" d="M30 56V32q0-2 2-2h24z"/></svg><span class="running idle"></span></button>
        </div>
        <div class="tray">
            <button aria-label="Hidden icons"><svg width="28" height="16" viewBox="0 0 28 16"><path fill="none" stroke="#111" stroke-width="3" d="M1 15L14 2l13 13"/></svg></button>
            <svg width="20" height="36" viewBox="0 0 20 36"><circle cx="18" cy="18" r="16" fill="#ccc" stroke="#111" stroke-width="3"/></svg>
        </div>
    </footer>
</body>
</html>
```
FILE: styles.css
```css
* {
    box-sizing: border-box;
}
body {
    margin: 0;
    height: 100vh;
    display: flex;
    flex-direction: column;
    overflow: hidden;
    background-color: #222933;
    color: #f2f2f2;
    font-family: "Open Sans", "Noto Sans", sans-serif;
    font-size: 28px;
    line-height: 40px;
}
button, input, select {
    margin: 0;
    padding: 0;
    border: 0;
    background: none;
    color: inherit;
    font: inherit;
}
button {
    display: flex;
    align-items: center;
    white-space: nowrap;
    flex-shrink: 0;
}
svg {
    display: block;
    flex-shrink: 0;
    overflow: visible;
}
.defs {
    position: absolute;
}

/* Icon colours */
.ic {
    width: 40px;
    height: 40px;
    color: #d9d9d9;
}
.ic.white {
    color: #fff;
}
.ic-big {
    width: 80px;
    height: 80px;
}
.fg { fill: #d9d9d9; }
.fb { fill: #8accff; }
.fy { fill: #ffd27f; }
.fw { fill: #fff; }
.fr { fill: #ff6161; }
.ft { fill: #72dbe6; }
.ln { fill: none; stroke: #d9d9d9; }
.lb { fill: none; stroke: #72bfff; }
.ln:not([stroke-width]), .lb:not([stroke-width]) {
    stroke-width: 2px;
}
.blk {
    fill: #6b707b;
    stroke: #d9d9d9;
    stroke-width: 2px;
}
.glyph-a {
    fill: #d9d9d9;
    stroke: #d9d9d9;
    stroke-width: 1px;
    font-family: Roboto, sans-serif;
    font-size: 98px;
}

/* Drop-down arrows */
.caret {
    flex-shrink: 0;
    width: 12px;
    height: 8px;
    background-color: #d9d9d9;
    clip-path: polygon(0 0, 100% 0, 50% 100%);
}
.caret.big {
    width: 20px;
    height: 10px;
}
.caret.dim {
    background-color: #8a8e94;
}
.caret.gray {
    background-color: #8c8c8c;
}
.caret-up {
    width: 20px;
    height: 10px;
    background-color: #8c8c8c;
    clip-path: polygon(0 100%, 100% 100%, 50% 0);
}
.caret-right {
    width: 10px;
    height: 20px;
    background-color: #d9d9d9;
    clip-path: polygon(0 0, 100% 50%, 0 100%);
}

/* Title bar */
.titlebar {
    display: flex;
    align-items: center;
    justify-content: space-between;
    flex-shrink: 0;
    height: 56px;
    padding: 0 2px 6px 0;
}
.quick-access {
    display: flex;
    align-items: center;
    margin-left: -2px;
}
.quick-access .ic {
    margin-top: -4px;
}
.quick-access .caret {
    margin-left: 19px;
    margin-top: -6px;
}
.undo, .redo, .customize, .share {
    margin-left: 19px;
}
.share {
    gap: 13px;
    color: #8accff;
}
.doc-title {
    display: flex;
    gap: 32px;
    font-size: 29px;
}
.account {
    display: flex;
    align-items: center;
    height: 50px;
}
.help-search {
    align-self: flex-start;
    width: 446px;
    height: 47px;
    margin-left: 14px;
    padding-left: 8px;
    background-color: #474f61;
    font-size: 26px;
    font-style: italic;
    font-weight: 500;
}
.help-search::placeholder {
    color: #b4b9c0;
    opacity: 1;
}
.find {
    margin: 0 20px 0 12px;
}
.find svg, .user svg {
    margin-top: -4px;
}
.user span:first-of-type {
    margin: 0 7px 0 14px;
}
.cart {
    margin: 0 20px 0 27px;
}

/* Menus and ribbon tabs */
.menubar {
    display: flex;
    flex-shrink: 0;
    gap: 39px;
    height: 50px;
    margin-left: -80px;
    border-bottom: 1px solid #3b4453;
    color: #bdbfc2;
}
.tabs {
    display: flex;
    flex-shrink: 0;
    gap: 52px;
    height: 60px;
    padding-top: 14px;
    margin-left: -33px;
    color: #bdbfc2;
}
.minimize {
    gap: 10px;
    margin-left: 28px;
}

/* Ribbon */
.ribbon {
    display: flex;
    flex-shrink: 0;
    height: 248px;
    padding: 2px 0 4px;
    overflow: hidden;
    background-color: #3b4453;
}
.panel {
    display: flex;
    flex-direction: column;
    flex-shrink: 0;
    padding-top: 12px;
    border-right: 2px solid #222933;
}
.panel-body {
    display: flex;
    height: 186px;
}
.panel-title {
    justify-content: center;
    align-self: center;
    gap: 16px;
    height: 40px;
    margin-top: 4px;
}
.rows {
    display: flex;
    flex-direction: column;
}
.split {
    height: 60px;
    gap: 18px;
}
.tool {
    height: 60px;
    gap: 14px;
}
.with-caret {
    padding-right: 32px;
}
.with-caret .caret {
    margin-left: auto;
}
.big-tool {
    flex-direction: column;
    height: 180px;
    padding-top: 6px;
    line-height: 41px;
}
.big-tool svg {
    margin-bottom: 8px;
}
.big-tool .caret {
    margin-top: 6px;
}
.panel-draw {
    width: 72px;
}
.panel-draw .rows {
    margin-left: -25px;
}
.modify-grid {
    display: grid;
    grid-template-columns: 180px 173px 187px 40px;
    grid-template-rows: 60px 60px 60px;
    padding: 0 26px 0 18px;
}
.panel-annotation .panel-body {
    padding: 0 15px 0 17px;
}
.text-tool {
    width: 84px;
    margin-right: 19px;
}
.panel-annotation .rows {
    margin-left: 21px;
}
.panel-layers .panel-body {
    gap: 8px;
    padding: 0 5px 0 12px;
}
.layer-col {
    width: 520px;
}
.layer-grid {
    display: grid;
    grid-template-columns: repeat(5, 60px);
    grid-auto-rows: 60px;
    margin-top: 2px;
    justify-items: center;
}
.combo {
    display: flex;
    align-items: center;
    flex: 1;
    height: 56px;
    margin-top: 2px;
    padding: 0 4px 0 8px;
    border: 2px solid #2a313d;
    background-color: #4d596d;
}
.layer-col .combo .ic {
    margin-right: 6px;
}
.combo-select {
    appearance: none;
    flex: 1;
    min-width: 0;
    height: 44px;
}
.combo option {
    color: #222933;
}
.swatch {
    flex-shrink: 0;
    width: 36px;
    height: 36px;
    margin: 0 12px 0 10px;
    border: 2px solid #d9d9d9;
    background-color: #ff00bf;
}
.swatch.large {
    width: 40px;
    height: 40px;
    margin-left: 7px;
    margin-right: 10px;
}
.line-sample {
    flex-shrink: 0;
    width: 160px;
    height: 3px;
    margin: 0 5px 0 7px;
    background-color: #fff;
}
.panel-block .panel-body {
    gap: 21px;
    padding: 0 15px 0 12px;
}
.panel-properties .panel-body {
    gap: 13px;
    padding: 0 6px 0 13px;
}
.prop-rows {
    width: 386px;
}
.prop-row {
    display: flex;
    align-items: center;
    gap: 6px;
    height: 60px;
}
.title-row {
    display: flex;
    align-items: center;
    justify-content: flex-end;
}
.title-row .panel-title {
    margin-right: 184px;
}
.launcher {
    margin-right: 14px;
}
.panel-groups .panel-body {
    gap: 21px;
    padding: 0 15px 0 13px;
}
.panel-utilities {
    border-right: 0;
}
.panel-utilities .panel-body {
    gap: 40px;
    padding: 0 15px 0 33px;
}

/* File tabs */
.file-tabs {
    display: flex;
    align-items: center;
    flex-shrink: 0;
    gap: 26px;
    height: 77px;
    padding: 4px 0 0 25px;
    border-bottom: 10px solid #3b4453;
}
.slash {
    width: 20px;
    height: 40px;
    background: linear-gradient(to bottom right, transparent 48%, #4a5464 48%, #4a5464 52%, transparent 52%);
}

/* Drawing area */
.canvas {
    position: relative;
    flex: 1;
    min-height: 0;
    background-color: #fff;
}
.drawing {
    width: 100%;
    height: 100%;
}
.command-window {
    position: absolute;
    left: 282px;
    right: 280px;
    bottom: 2px;
    display: flex;
    border: 2px solid #666b75;
    border-radius: 6px;
    overflow: hidden;
    background-color: #fff;
    color: #474747;
    font-family: "DejaVu Sans Mono", monospace;
    font-size: 30px;
    line-height: 38px;
}
.command-handle {
    display: flex;
    flex-direction: column;
    align-items: center;
    gap: 18px;
    width: 60px;
    padding-top: 12px;
    background-color: #6b707b;
}
.command-handle button {
    margin-right: 6px;
}
.wrench {
    margin-top: 10px;
}
.command-main {
    flex: 1;
}
.history {
    padding: 8px 4px 4px;
    border-bottom: 2px solid #666b75;
    background-color: #d9d9d9;
}
.command-line {
    display: flex;
    align-items: center;
    height: 50px;
    padding: 0 12px 0 10px;
}
.command-line .gray {
    margin: 0 16px 0 5px;
}
.command-input {
    flex: 1;
    font-style: italic;
}
.command-input::placeholder {
    color: #999;
    opacity: 1;
}

/* Status bar */
.statusbar {
    display: flex;
    justify-content: space-between;
    flex-shrink: 0;
    height: 76px;
    padding-bottom: 2px;
    border-top: 10px solid #3b4453;
}
.layout-tabs {
    display: flex;
    align-items: center;
    gap: 26px;
    padding: 0 0 4px 17px;
}
.status-tools {
    display: flex;
    gap: 2px;
    padding-top: 4px;
}
.block {
    display: flex;
    align-items: center;
    height: 60px;
    background-color: #3b4453;
}
.block.gap {
    margin-left: 4px;
}
.model {
    justify-content: center;
    width: 120px;
    font-size: 29px;
}
.cell {
    justify-content: center;
    width: 60px;
    height: 60px;
}
.cell.active {
    border: 2px solid #3b4453;
    background-color: #618ec0;
}
.drop {
    width: 40px;
    height: 60px;
    padding-left: 10px;
}
.scale {
    justify-content: space-between;
    width: 84px;
    padding: 0 9px 0 10px;
}
.units {
    width: 106px;
    overflow: hidden;
}
.units button {
    gap: 23px;
    padding-left: 10px;
}

/* Windows taskbar */
.taskbar {
    display: flex;
    align-items: center;
    flex-shrink: 0;
    height: 120px;
    padding-bottom: 2px;
    border-top: 3px solid #bdbabd;
    background-color: #eee;
    color: #5c5c5c;
}
.start {
    margin: 0 34px 0 361px;
}
.task-search {
    display: flex;
    align-items: center;
    gap: 25px;
    width: 547px;
    height: 80px;
    padding-left: 27px;
    border: 2px solid #dedede;
    border-bottom: 3px solid #c6c6c6;
    border-radius: 40px;
    background-color: #fafafa;
    font-size: 32px;
}
.task-search input {
    flex: 1;
    min-width: 0;
}
.task-search input::placeholder {
    color: #5c5c5c;
    opacity: 1;
}
.apps {
    display: flex;
    margin-left: 7px;
}
.app {
    position: relative;
    justify-content: center;
    width: 100px;
    height: 100px;
    margin: 0 5px;
    border-radius: 12px;
}
.app svg {
    width: 60px;
    height: 60px;
}
.app.current {
    border: 2px solid #e4e4e4;
    background-color: #f8f8f8;
}
.badge {
    position: absolute;
    left: 52px;
    top: 7px;
    width: 40px;
    height: 40px;
    border-radius: 50%;
    background-color: #0078d4;
    color: #fff;
}
.running {
    position: absolute;
    left: 28px;
    bottom: 1px;
    width: 40px;
    height: 8px;
    border-radius: 4px;
    background-color: #0078d4;
}
.running.idle {
    left: 43px;
    bottom: 3px;
    width: 15px;
    background-color: #858585;
}
.logo, .logo-big, .logo-small {
    fill: #fff;
    font-weight: 700;
}
.logo {
    font-size: 22px;
}
.logo-big {
    font-family: Roboto, sans-serif;
    font-size: 38px;
}
.logo-small {
    font-family: Roboto, sans-serif;
    font-size: 14px;
}
.tray {
    display: flex;
    align-items: center;
    flex-shrink: 0;
    gap: 46px;
    width: 79px;
    margin-left: auto;
    overflow: hidden;
}
```
